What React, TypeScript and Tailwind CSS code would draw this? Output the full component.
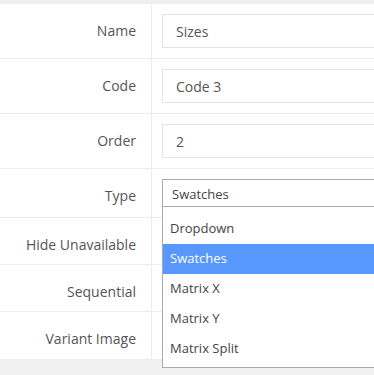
import React from "react";

const font = { fontFamily: '"Open Sans", "Liberation Sans", sans-serif' };

function Row({
  label,
  h,
  top,
  children,
}: {
  label: string;
  h: string;
  top?: boolean;
  children?: React.ReactNode;
}) {
  return (
    <div className={`flex border-b border-[#ececec] ${h}`}>
      <div
        className={`w-[152px] shrink-0 border-r border-[#ececec] pr-[15px] flex justify-end text-[14px] leading-[20px] text-[#555] ${
          top ? "items-start pt-[17px]" : "items-center"
        }`}
      >
        {label}
      </div>
      <div className="flex-1 relative pl-[10px] flex items-center">{children}</div>
    </div>
  );
}

function Input({ value }: { value: string }) {
  return (
    <div className="w-[260px] shrink-0 h-[34px] border border-[#e4e4e4] pl-[13px] flex items-center text-[14px] text-[#555]">
      {value}
    </div>
  );
}

export default function App() {
  const options = ["Dropdown", "Swatches", "Matrix X", "Matrix Y", "Matrix Split"];
  return (
    <div className="w-[374px] h-[375px] overflow-hidden bg-[#f1f1f1]" style={font}>
      <div className="h-[4px] bg-[#efefef]" />
      <div className="bg-white">
        <Row label="Name" h="h-[55px]">
          <Input value="Sizes" />
        </Row>
        <Row label="Code" h="h-[55px]">
          <Input value="Code 3" />
        </Row>
        <Row label="Order" h="h-[55px]">
          <Input value="2" />
        </Row>
        <Row label="Type" h="h-[49px]" top>
          <div className="relative w-[260px] shrink-0">
            <div className="h-[28px] border border-[#aaa] pl-[9px] pt-[3px] flex items-center text-[13px] text-[#444]">
              Swatches
            </div>
            <div className="absolute left-0 top-[27px] w-[260px] z-10 bg-white border border-[#aaa] pt-[7px] pb-[3px]">
              {options.map((o) => (
                <div
                  key={o}
                  className={`h-[30px] pl-[7px] flex items-center text-[13px] ${
                    o === "Swatches" ? "bg-[#5897fb] text-white" : "text-[#444]"
                  }`}
                >
                  {o}
                </div>
              ))}
            </div>
          </div>
        </Row>
        <Row label="Hide Unavailable" h="h-[47px]" top />
        <Row label="Sequential" h="h-[47px]" top />
        <Row label="Variant Image" h="h-[48px]" top />
      </div>
    </div>
  );
}
